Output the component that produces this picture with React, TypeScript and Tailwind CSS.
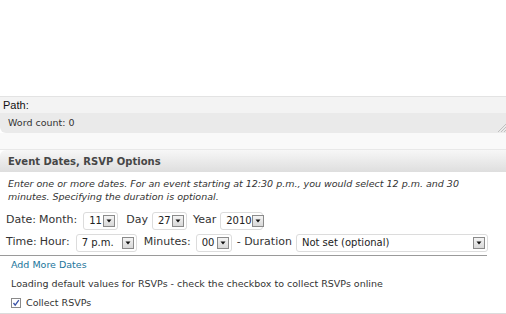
import React from "react";

function Drop({ value, className }: { value: string; className: string }) {
  return (
    <span className={`inline-flex h-[18px] shrink-0 items-center justify-between rounded-[3px] border border-[#dcdcdc] bg-white pl-[5px] pr-[2px] text-[10px] text-[#222] ${className}`}>
      <span className="whitespace-nowrap">{value}</span>
      <span className="flex h-[12px] w-[12px] shrink-0 items-center justify-center border border-[#8a8a8a] bg-gradient-to-b from-[#f4f4f4] to-[#d8d8d8]">
        <svg width="6" height="4" viewBox="0 0 6 4">
          <path d="M0.5 0.5h5L3 3.5z" fill="#111" />
        </svg>
      </span>
    </span>
  );
}

export default function App() {
  return (
    <div className="h-[314px] w-[506px] overflow-hidden bg-white font-['DejaVu_Sans',Verdana,sans-serif] text-[#333]">
      <div className="h-[96px]" />
      <div className="flex h-[17px] items-center border-t border-[#e3e3e3] bg-[#f3f3f3] pl-[3px] font-['Liberation_Sans',Arial,sans-serif] text-[11px] text-[#111]">
        Path:
      </div>
      <div className="relative flex h-[20px] items-center rounded-bl-[6px] bg-[#eaeaea] pl-[8px] text-[9.5px] text-[#333]">
        Word count: 0
        <svg className="absolute bottom-[1px] right-0" width="10" height="10" viewBox="0 0 10 10">
          <path d="M10 2L2 10M10 5L5 10M10 8L8 10" stroke="#b5b5b5" strokeWidth="0.8" />
        </svg>
      </div>
      <div className="h-[17px] border-b border-[#e8e8e8] bg-[#f9f9f9]" />
      <div className="flex h-[22px] items-center rounded-tl-[6px] bg-gradient-to-b from-[#f7f7f7] to-[#dedede] pl-[8px] text-[10px] font-bold text-[#464646]">
        Event Dates, RSVP Options
      </div>
      <div className="w-[475px] pl-[8px] pt-[5px] text-[9.5px] italic leading-[13px] text-[#333]">
        Enter one or more dates. For an event starting at 12:30 p.m., you would select 12 p.m. and 30 minutes. Specifying the duration is optional.
      </div>
      <div className="mt-[8px] w-[487px] border-b border-[#9a9a9a] pb-[3px] text-[11px] text-[#333]">
        <div className="flex h-[19px] items-center whitespace-nowrap pl-[6px]">
          <span>Date:</span>
          <span className="ml-[3px]">Month:</span>
          <Drop value="11" className="ml-[6px] w-[35px]" />
          <span className="ml-[8px]">Day</span>
          <Drop value="27" className="ml-[4px] w-[35px]" />
          <span className="ml-[6px]">Year</span>
          <Drop value="2010" className="ml-[4px] w-[43px]" />
        </div>
        <div className="mt-[3px] flex h-[19px] items-center whitespace-nowrap pl-[6px]">
          <span>Time:</span>
          <span className="ml-[3px]">Hour:</span>
          <Drop value="7 p.m." className="ml-[6px] w-[61px]" />
          <span className="ml-[7px]">Minutes:</span>
          <Drop value="00" className="ml-[5px] w-[36px]" />
          <span className="ml-[5px]">- Duration</span>
          <Drop value="Not set (optional)" className="ml-[4px] w-[192px]" />
        </div>
      </div>
      <div className="pl-[11px] pt-[2px] text-[9.5px] leading-[13px]">
        <div className="text-[#21759b]">Add More Dates</div>
        <div className="mt-[6px]">Loading default values for RSVPs - check the checkbox to collect RSVPs online</div>
        <div className="mt-[6px] flex items-center">
          <span className="flex h-[10px] w-[10px] items-center justify-center border border-[#8a8a8a] bg-white">
            <svg width="8" height="8" viewBox="0 0 8 8">
              <path d="M1.5 4L3.2 6.2L6.8 1.2" stroke="#3a53a8" strokeWidth="1.3" fill="none" />
            </svg>
          </span>
          <span className="ml-[5px]">Collect RSVPs</span>
        </div>
      </div>
      <div className="mt-[4px] border-t border-[#dcdcdc]" />
    </div>
  );
}
